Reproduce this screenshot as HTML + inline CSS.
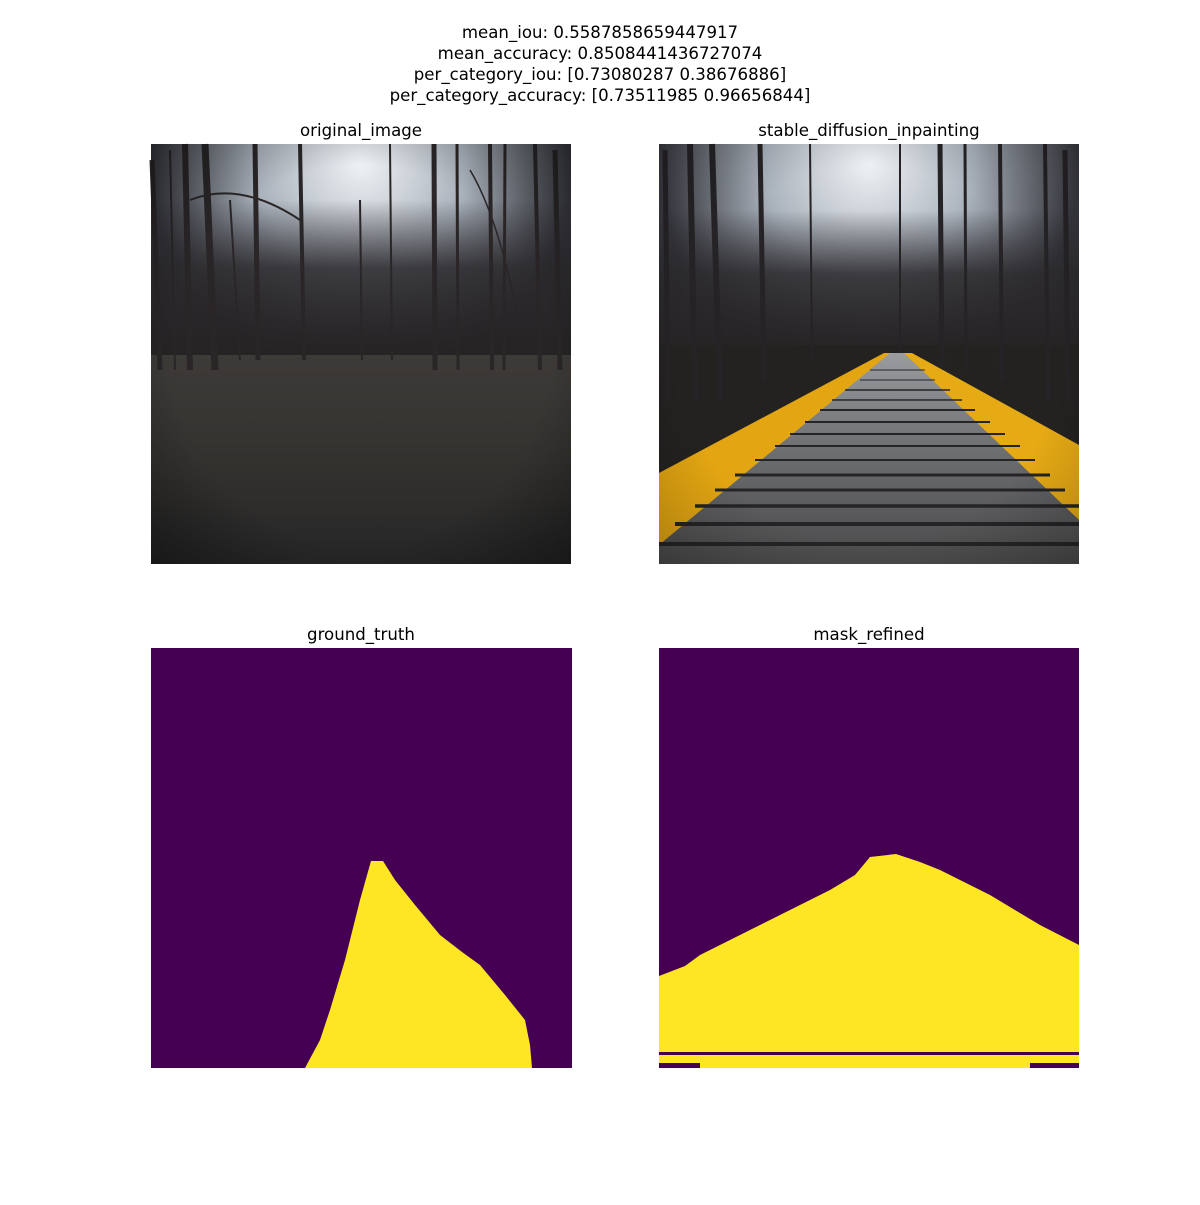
<!DOCTYPE html>
<html><head><meta charset="utf-8"><style>
html,body{margin:0;padding:0;background:#fff;}
body{width:1200px;height:1200px;overflow:hidden;}
svg text{font-family:"DejaVu Sans","Liberation Sans",sans-serif;font-size:16.6px;fill:#000;}
</style></head><body>
<svg width="1200" height="1200" viewBox="0 0 1200 1200" xmlns="http://www.w3.org/2000/svg">
<defs>
<radialGradient id="sky" cx="0.5" cy="0.05" r="0.5">
<stop offset="0" stop-color="#eef1f4"/><stop offset="0.5" stop-color="#aab2bc"/><stop offset="1" stop-color="#3a3b42"/>
</radialGradient>
<linearGradient id="ground" x1="0" y1="0" x2="0" y2="1">
<stop offset="0" stop-color="#3d3a38"/><stop offset="0.5" stop-color="#34322f"/><stop offset="1" stop-color="#262627"/>
</linearGradient>
<linearGradient id="forest" x1="0" y1="0" x2="0" y2="1">
<stop offset="0" stop-color="#2c2b30" stop-opacity="0"/><stop offset="0.4" stop-color="#2a282b" stop-opacity="0.85"/><stop offset="1" stop-color="#242122"/>
</linearGradient>
<linearGradient id="road" x1="0" y1="0" x2="0" y2="1">
<stop offset="0" stop-color="#9a9ca0"/><stop offset="0.5" stop-color="#6a6b6d"/><stop offset="1" stop-color="#4a4a4b"/>
</linearGradient>
<radialGradient id="vig" cx="0.5" cy="0.5" r="0.75">
<stop offset="0.6" stop-color="#000" stop-opacity="0"/><stop offset="1" stop-color="#000" stop-opacity="0.45"/>
</radialGradient>
</defs>

<text x="600" y="38" text-anchor="middle">mean_iou: 0.5587858659447917</text>
<text x="600" y="59" text-anchor="middle">mean_accuracy: 0.8508441436727074</text>
<text x="600" y="80" text-anchor="middle">per_category_iou: [0.73080287 0.38676886]</text>
<text x="600" y="101" text-anchor="middle">per_category_accuracy: [0.73511985 0.96656844]</text>

<text x="361" y="136" text-anchor="middle">original_image</text>
<text x="869" y="136" text-anchor="middle">stable_diffusion_inpainting</text>
<text x="361" y="640" text-anchor="middle">ground_truth</text>
<text x="869" y="640" text-anchor="middle">mask_refined</text>

<!-- original image -->
<g>
<rect x="151" y="144" width="420" height="420" fill="url(#sky)"/>
<rect x="151" y="200" width="420" height="170" fill="url(#forest)"/>
<rect x="151" y="355" width="420" height="209" fill="url(#ground)"/>
<g stroke="#2a2628" fill="none">
<path d="M185 144 L190 370" stroke-width="6"/>
<path d="M205 144 L215 370" stroke-width="7"/>
<path d="M255 144 L258 360" stroke-width="5"/>
<path d="M300 144 L304 360" stroke-width="4"/>
<path d="M152 160 L160 370" stroke-width="5"/>
<path d="M434 144 L435 370" stroke-width="5"/>
<path d="M457 144 L458 370" stroke-width="3"/>
<path d="M490 144 L492 370" stroke-width="4"/>
<path d="M505 144 L504 370" stroke-width="3"/>
<path d="M535 144 L540 370" stroke-width="4"/>
<path d="M555 150 L560 370" stroke-width="5"/>
<path d="M390 144 L392 360" stroke-width="2"/>
<path d="M360 200 L362 360" stroke-width="2"/>
<path d="M230 200 L240 360" stroke-width="2"/>
<path d="M170 150 L175 370" stroke-width="2"/>
<path d="M190 200 Q240 180 300 220" stroke-width="2"/>
<path d="M470 170 Q500 220 520 330" stroke-width="1.5"/>
</g>
<rect x="151" y="144" width="420" height="420" fill="url(#vig)"/>
</g>

<!-- stable diffusion -->
<g>
<rect x="659" y="144" width="420" height="420" fill="url(#sky)"/>
<rect x="659" y="210" width="420" height="160" fill="url(#forest)"/>
<rect x="659" y="345" width="420" height="219" fill="#242221"/>
<g stroke="#262326" fill="none">
<path d="M690 144 L695 400" stroke-width="6"/>
<path d="M712 144 L720 400" stroke-width="6"/>
<path d="M760 144 L764 380" stroke-width="5"/>
<path d="M665 150 L668 400" stroke-width="5"/>
<path d="M940 144 L942 370" stroke-width="5"/>
<path d="M965 144 L966 370" stroke-width="3"/>
<path d="M1000 144 L1002 380" stroke-width="4"/>
<path d="M1045 144 L1048 400" stroke-width="4"/>
<path d="M1065 150 L1068 400" stroke-width="5"/>
<path d="M900 144 L900 360" stroke-width="2"/>
<path d="M810 144 L812 360" stroke-width="2"/>
</g>
<polygon points="884,353 897,353 659,545 659,473" fill="#e3a612"/>
<polygon points="897,353 912,353 1079,445 1079,520" fill="#e6aa14"/>
<polygon points="890,353 904,353 1079,520 1079,564 659,564 659,545" fill="url(#road)"/>
<g stroke="#252527" stroke-width="2">
<line x1="870" y1="370" x2="925" y2="370" stroke-width="1"/>
<line x1="860" y1="380" x2="935" y2="380" stroke-width="1"/>
<line x1="845" y1="390" x2="950" y2="390" stroke-width="1.5"/>
<line x1="832" y1="400" x2="962" y2="400" stroke-width="1.5"/>
<line x1="820" y1="410" x2="975" y2="410"/>
<line x1="805" y1="422" x2="990" y2="422"/>
<line x1="790" y1="434" x2="1005" y2="434"/>
<line x1="775" y1="446" x2="1020" y2="446"/>
<line x1="755" y1="460" x2="1035" y2="460"/>
<line x1="735" y1="475" x2="1050" y2="475" stroke-width="3"/>
<line x1="715" y1="490" x2="1065" y2="490" stroke-width="3"/>
<line x1="695" y1="506" x2="1079" y2="506" stroke-width="3.5"/>
<line x1="675" y1="524" x2="1079" y2="524" stroke-width="4"/>
<line x1="659" y1="544" x2="1079" y2="544" stroke-width="4"/>
</g>
<rect x="659" y="144" width="420" height="420" fill="url(#vig)" opacity="0.6"/>
</g>

<!-- ground truth -->
<rect x="151" y="648" width="421" height="420" fill="#440154"/>
<polygon points="371,861 383,861 395,880 415,905 440,935 462,952 480,965 505,995 525,1020 530,1045 532,1068 305,1068 320,1040 330,1010 345,960 360,900" fill="#fde725"/>

<!-- mask refined -->
<rect x="659" y="648" width="420" height="420" fill="#440154"/>
<polygon points="659,976 685,966 700,955 730,940 760,925 790,910 830,890 855,875 870,857 896,854 920,862 940,870 990,895 1040,925 1079,945 1079,1052 659,1052" fill="#fde725"/>
<rect x="659" y="1055" width="420" height="8" fill="#fde725"/>
<rect x="700" y="1063" width="330" height="5" fill="#fde725"/>
</svg>
</body></html>
